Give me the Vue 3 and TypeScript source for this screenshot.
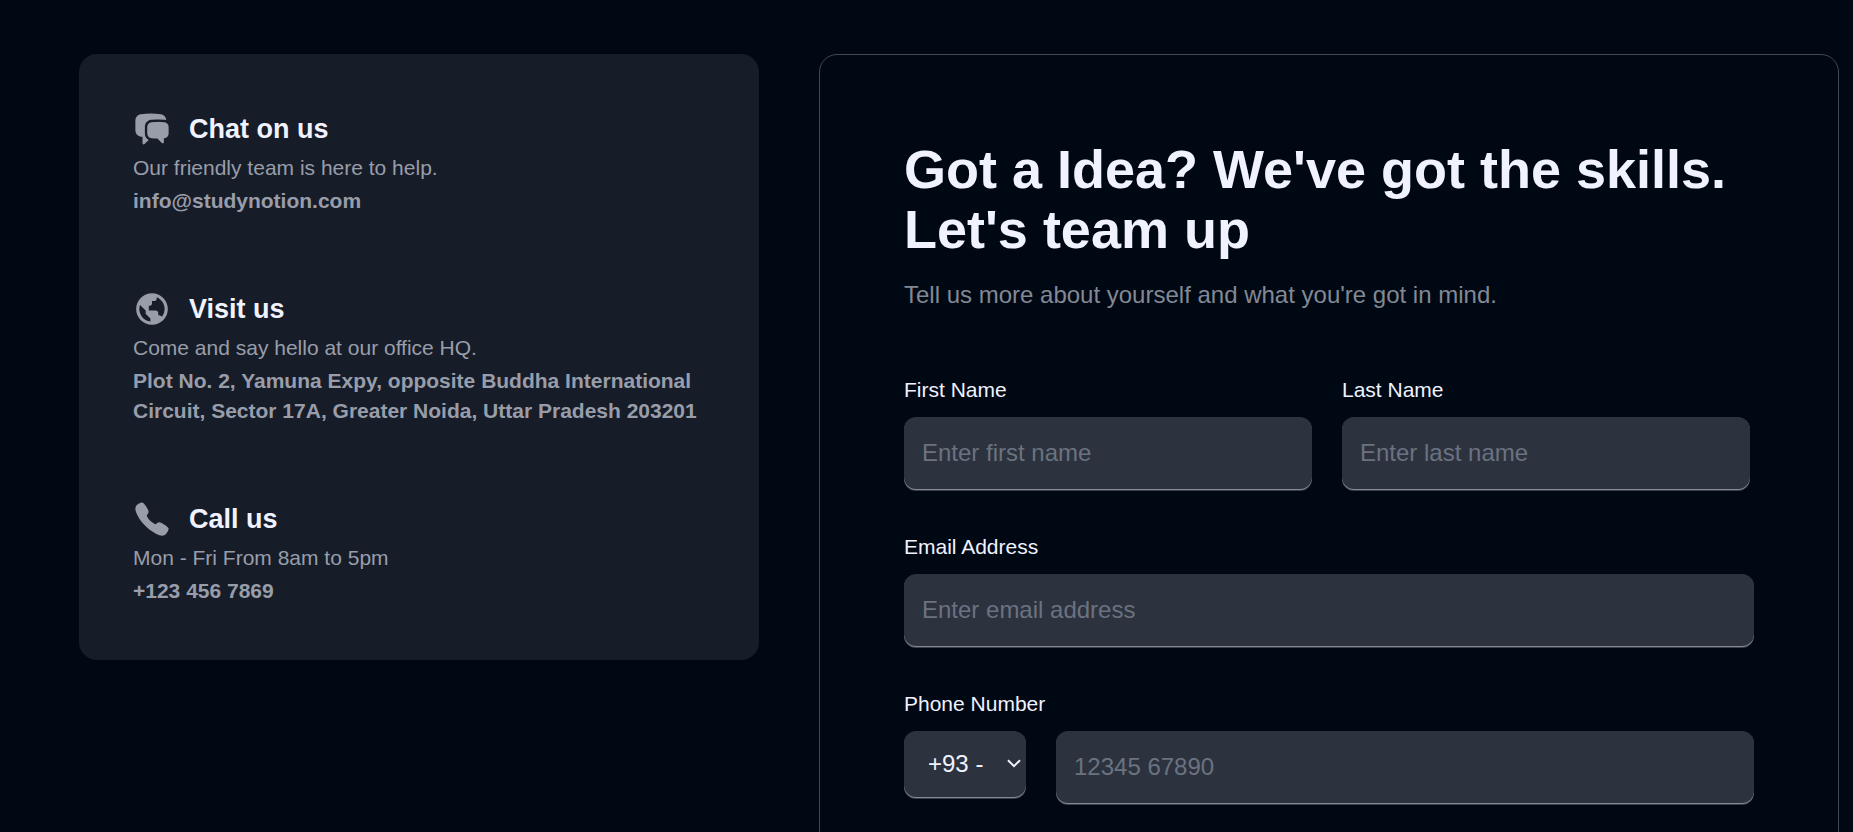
<script setup lang="ts">
import { ref } from 'vue'

interface ContactDetail {
  title: string
  note: string
  value: string
  viewBox: string
  paths: string[]
}

const details: ContactDetail[] = [
  {
    title: 'Chat on us',
    note: 'Our friendly team is here to help.',
    value: 'info@studynotion.com',
    viewBox: '0 0 24 24',
    paths: [
      'M4.913 2.658c2.075-.27 4.19-.408 6.337-.408 2.147 0 4.262.139 6.337.408 1.922.25 3.291 1.861 3.405 3.727a4.403 4.403 0 00-1.032-.211 50.89 50.89 0 00-8.42 0c-2.358.196-4.04 2.19-4.04 4.434v4.286a4.47 4.47 0 002.433 3.984L7.28 21.53A.75.75 0 016 21v-4.03a48.527 48.527 0 01-1.087-.128C2.905 16.58 1.5 14.833 1.5 12.862V6.638c0-1.97 1.405-3.718 3.413-3.979z',
      'M15.75 7.5c-1.376 0-2.739.057-4.086.169C10.124 7.797 9 9.103 9 10.609v4.285c0 1.507 1.128 2.814 2.67 2.94 1.243.102 2.5.157 3.768.165l2.782 2.781a.75.75 0 001.28-.53v-2.39l.33-.026c1.542-.125 2.67-1.433 2.67-2.94v-4.286c0-1.505-1.125-2.811-2.664-2.94A49.392 49.392 0 0015.75 7.5z',
    ],
  },
  {
    title: 'Visit us',
    note: 'Come and say hello at our office HQ.',
    value: 'Plot No. 2, Yamuna Expy, opposite Buddha International Circuit, Sector 17A, Greater Noida, Uttar Pradesh 203201',
    viewBox: '0 0 24 24',
    paths: [
      'M12 2C6.486 2 2 6.486 2 12s4.486 10 10 10 10-4.486 10-10S17.514 2 12 2zM4 12c0-.899.156-1.762.431-2.569L6 11l2 2v2l2 2 1 1v1.931C7.061 19.436 4 16.072 4 12zm14.33 4.873C17.677 16.347 16.687 16 16 16v-1a2 2 0 0 0-2-2h-4v-3a2 2 0 0 0 2-2V7h1a2 2 0 0 0 2-2v-.411C17.928 5.778 20 8.65 20 12a7.947 7.947 0 0 1-1.67 4.873z',
    ],
  },
  {
    title: 'Call us',
    note: 'Mon - Fri From 8am to 5pm',
    value: '+123 456 7869',
    viewBox: '0 0 512 512',
    paths: [
      'M391 480c-19.52 0-46.94-7.06-88-30-49.93-28-88.55-53.85-138.21-103.38C116.91 298.77 93.61 267.79 61 208.45c-36.84-67-30.56-102.12-23.54-117.13C45.82 73.38 58.16 62.65 74.11 52a176.3 176.3 0 0128.64-15.2c1-.43 1.93-.84 2.76-1.21 4.95-2.23 12.45-5.6 21.95-2 6.34 2.38 12 7.25 20.86 16 18.17 17.92 43 57.83 52.16 77.43 6.15 13.21 10.22 21.93 10.23 31.71 0 11.45-5.76 20.28-12.75 29.81-1.31 1.79-2.61 3.5-3.87 5.16-7.61 10-9.28 12.89-8.18 18.05 2.23 10.37 18.86 41.24 46.19 68.51s57.31 42.85 67.72 45.07c5.38 1.15 8.33-.59 18.65-8.47 1.48-1.13 3-2.3 4.59-3.47 10.66-7.93 19.08-13.54 30.26-13.54h.06c9.73 0 18.06 4.22 31.86 11.18 18 9.08 59.11 33.59 77.14 51.78 8.77 8.84 13.66 14.48 16.05 20.81 3.6 9.53.21 17-2 22-.37.83-.78 1.74-1.21 2.75a176.49 176.49 0 01-15.29 28.58c-10.63 15.9-21.4 28.21-39.38 36.58A67.42 67.42 0 01391 480z',
    ],
  },
]

const firstName = ref('')
const lastName = ref('')
const email = ref('')
const phone = ref('')
const countryCode = ref('+93')
</script>

<template>
  <main class="page">
    <aside class="details">
      <section v-for="item in details" :key="item.title" class="detail">
        <div class="detail-head">
          <svg class="detail-icon" :viewBox="item.viewBox" fill="currentColor" aria-hidden="true">
            <path v-for="d in item.paths" :key="d" :d="d" />
          </svg>
          <h2 class="detail-title">{{ item.title }}</h2>
        </div>
        <p class="detail-note">{{ item.note }}</p>
        <p class="detail-value">{{ item.value }}</p>
      </section>
    </aside>

    <section class="panel">
      <h1 class="title">Got a Idea? We've got the skills. Let's team up</h1>
      <p class="subtitle">Tell us more about yourself and what you're got in mind.</p>

      <form class="form" @submit.prevent>
        <div class="names">
          <div class="field name">
            <label class="label" for="first-name">First Name</label>
            <input id="first-name" v-model="firstName" class="control" type="text" placeholder="Enter first name" />
          </div>
          <div class="field name">
            <label class="label" for="last-name">Last Name</label>
            <input id="last-name" v-model="lastName" class="control" type="text" placeholder="Enter last name" />
          </div>
        </div>

        <div class="field">
          <label class="label" for="email">Email Address</label>
          <input id="email" v-model="email" class="control" type="email" placeholder="Enter email address" />
        </div>

        <div class="field">
          <label class="label" for="phone">Phone Number</label>
          <div class="phone">
            <div class="code">
              <select v-model="countryCode" class="control code-select" aria-label="Country code">
                <option value="+93">+93 - Afghanistan</option>
              </select>
              <svg class="chevron" viewBox="0 0 14 9" fill="none" stroke="currentColor" stroke-width="2" aria-hidden="true">
                <path d="M1 1.2 7 7.2 13 1.2" />
              </svg>
            </div>
            <input id="phone" v-model="phone" class="control" type="tel" placeholder="12345 67890" />
          </div>
        </div>
      </form>
    </section>
  </main>
</template>

<style>
body {
  margin: 0;
  background: #000814;
}
</style>

<style scoped>
* {
  box-sizing: border-box;
}

.page {
  display: grid;
  grid-template-columns: 2fr 3fr;
  align-items: start;
  gap: 60px;
  padding: 54px 14px 54px 79px;
  font-family: "Liberation Sans", Arial, sans-serif;
  color: #f1f2ff;
}

.details {
  display: flex;
  flex-direction: column;
  gap: 72px;
  padding: 54px;
  border-radius: 18px;
  background: #161d29;
  color: #999daa;
}

.detail {
  display: flex;
  flex-direction: column;
  gap: 3px;
  font-size: 21px;
  line-height: 30px;
}

.detail-head {
  display: flex;
  align-items: center;
  gap: 18px;
}

.detail-icon {
  flex: none;
  width: 38px;
  height: 38px;
}

.detail-title {
  margin: 0;
  font-size: 27px;
  line-height: 42px;
  font-weight: 700;
  color: #f1f2ff;
}

.detail-note,
.detail-value {
  margin: 0;
}

.detail-value {
  font-weight: 700;
}

.panel {
  padding: 84px;
  border: 1px solid #424854;
  border-radius: 18px;
}

.title {
  margin: 0;
  font-size: 54px;
  line-height: 60px;
  font-weight: 700;
}

.subtitle {
  margin: 18px 0 0;
  font-size: 24px;
  line-height: 36px;
  color: #838894;
}

.form {
  display: flex;
  flex-direction: column;
  gap: 42px;
  margin-top: 61px;
}

.names {
  display: flex;
  gap: 30px;
}

.field {
  display: flex;
  flex-direction: column;
  gap: 12px;
}

.name {
  width: 48%;
}

.label {
  font-size: 21px;
  line-height: 31px;
}

.control {
  width: 100%;
  min-width: 0;
  height: 72px;
  margin: 0;
  padding: 18px;
  border: 0;
  border-radius: 12px;
  outline: none;
  background: #2c333f;
  box-shadow: 0 1px 0 #858992, 0 2px 0 #3a404b;
  font-family: inherit;
  font-size: 24px;
  line-height: 36px;
  color: #f1f2ff;
}

.control::placeholder {
  color: #6b7280;
  opacity: 1;
}

.phone {
  display: flex;
  align-items: flex-start;
  gap: 30px;
}

.code {
  position: relative;
  flex: none;
  width: 122px;
}

.code-select {
  display: block;
  height: 66px;
  padding: 0 41px 0 24px;
  appearance: none;
  text-overflow: clip;
}

.chevron {
  position: absolute;
  top: 28px;
  right: 5px;
  width: 14px;
  height: 9px;
  pointer-events: none;
}
</style>
